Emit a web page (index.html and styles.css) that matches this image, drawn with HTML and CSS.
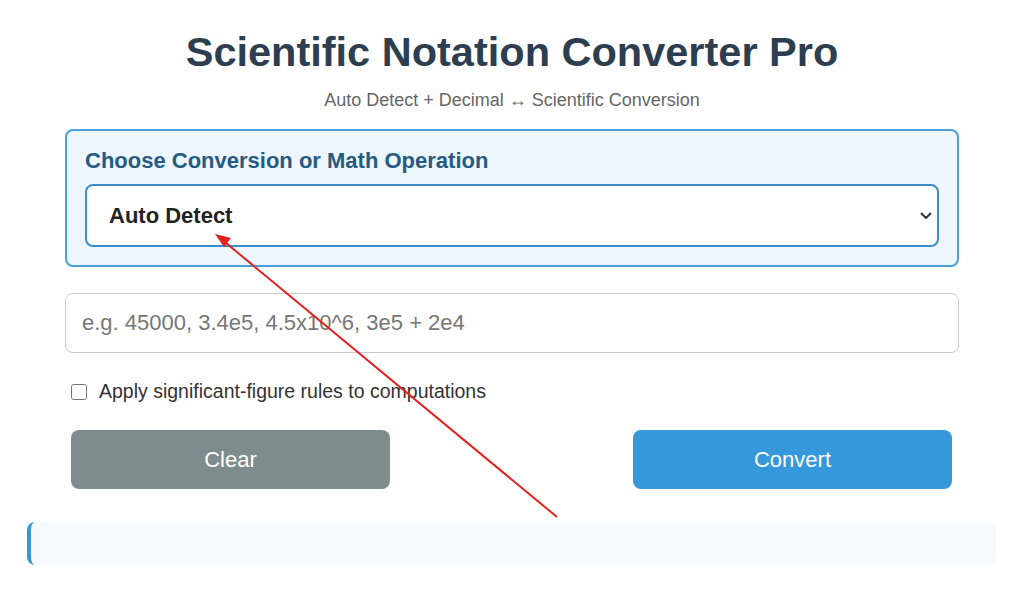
FILE: index.html
```html
<!DOCTYPE html>
<html lang="en">
<head>
  <meta charset="UTF-8">
  <meta name="viewport" content="width=device-width, initial-scale=1.0">
  <title>Scientific Notation Converter Pro</title>
  <link rel="stylesheet" href="styles.css">
</head>
<body>
  <main class="converter">
    <h1>Scientific Notation Converter Pro</h1>
    <p class="subtitle">Auto Detect + Decimal &harr; Scientific Conversion</p>

    <div class="mode-box">
      <label class="mode-label" for="mode">Choose Conversion or Math Operation</label>
      <div class="select-wrap">
        <select id="mode">
          <option>Auto Detect</option>
          <option>Decimal to Scientific</option>
          <option>Scientific to Decimal</option>
          <option>Add</option>
          <option>Subtract</option>
          <option>Multiply</option>
          <option>Divide</option>
        </select>
        <svg class="chevron" width="12" height="8" viewBox="0 0 12 8">
          <path d="M1.5 1.5 L6 6 L10.5 1.5" fill="none" stroke="#333" stroke-width="2" stroke-linecap="round" stroke-linejoin="round"/>
        </svg>
      </div>
    </div>

    <input class="number-input" type="text" placeholder="e.g. 45000, 3.4e5, 4.5x10^6, 3e5 + 2e4">

    <label class="sigfig">
      <input type="checkbox">
      <span>Apply significant-figure rules to computations</span>
    </label>

    <div class="actions">
      <button class="btn btn-clear">Clear</button>
      <button class="btn btn-convert">Convert</button>
    </div>

    <div class="result"></div>
  </main>

  <!-- annotation arrow drawn on top of the screenshot -->
  <svg class="annotation" width="1024" height="599" viewBox="0 0 1024 599">
    <line x1="557" y1="517" x2="226" y2="243" stroke="#e3211f" stroke-width="2"/>
    <polygon points="215,234 231,238 224,247" fill="#e3211f"/>
  </svg>
</body>
</html>
```

FILE: styles.css
```css
:root {
  --azul: #3498db;
  --cinza: #7f8c8d;
  --titulo: #2c3e50;
}

body {
  margin: 0;
  background: #fff;
  font-family: "Liberation Sans", Arial, sans-serif;
  color: #333;
}

.converter {
  width: 894px;
  margin: 0 auto;
  padding-top: 28px;
}

h1 {
  margin: 0;
  font-size: 41.5px;
  font-weight: bold;
  color: var(--titulo);
  text-align: center;
}

.subtitle {
  margin: 14px 0 0;
  font-size: 18px;
  color: #666;
  text-align: center;
}

.mode-box {
  margin-top: 18px;
  padding: 17px 18px 18px;
  background: #eef6fd;
  border: 2px solid #4aa0d8;
  border-radius: 8px;
}

.mode-label {
  display: block;
  font-size: 22px;
  font-weight: bold;
  color: #255a82;
  margin-bottom: 10px;
}

.select-wrap {
  position: relative;
}

.select-wrap select {
  display: block;
  width: 100%;
  height: 63px;
  padding: 0 40px 0 22px;
  border: 2px solid #3b8ec9;
  border-radius: 8px;
  background: #fff;
  font-family: inherit;
  font-size: 22px;
  font-weight: bold;
  color: #222;
  appearance: none;
  -webkit-appearance: none;
}

.chevron {
  position: absolute;
  right: 7px;
  top: 28px;
  pointer-events: none;
}

.number-input {
  display: block;
  box-sizing: border-box;
  width: 100%;
  height: 60px;
  margin-top: 26px;
  padding: 0 16px;
  border: 1px solid #ccc;
  border-radius: 8px;
  font-family: inherit;
  font-size: 22px;
  color: #333;
}

.number-input::placeholder {
  color: #777;
}

.sigfig {
  display: flex;
  align-items: center;
  margin-top: 27px;
  padding-left: 6px;
  font-size: 19.5px;
  color: #333;
}

.sigfig input {
  width: 16px;
  height: 16px;
  margin: 0 12px 0 0;
}

.actions {
  display: flex;
  justify-content: space-between;
  margin-top: 27px;
  padding: 0 7px 0 6px;
}

.btn {
  width: 319px;
  height: 59px;
  border: none;
  border-radius: 8px;
  font-family: inherit;
  font-size: 22px;
  color: #fff;
  cursor: pointer;
}

.btn-clear {
  background: var(--cinza);
}

.btn-convert {
  background: var(--azul);
}

.result {
  height: 43px;
  margin: 33px -37px 0 -38px;
  background: #f7fafd;
  border-left: 4px solid var(--azul);
  border-radius: 8px;
}

.annotation {
  position: absolute;
  left: 0;
  top: 0;
  pointer-events: none;
}
```
